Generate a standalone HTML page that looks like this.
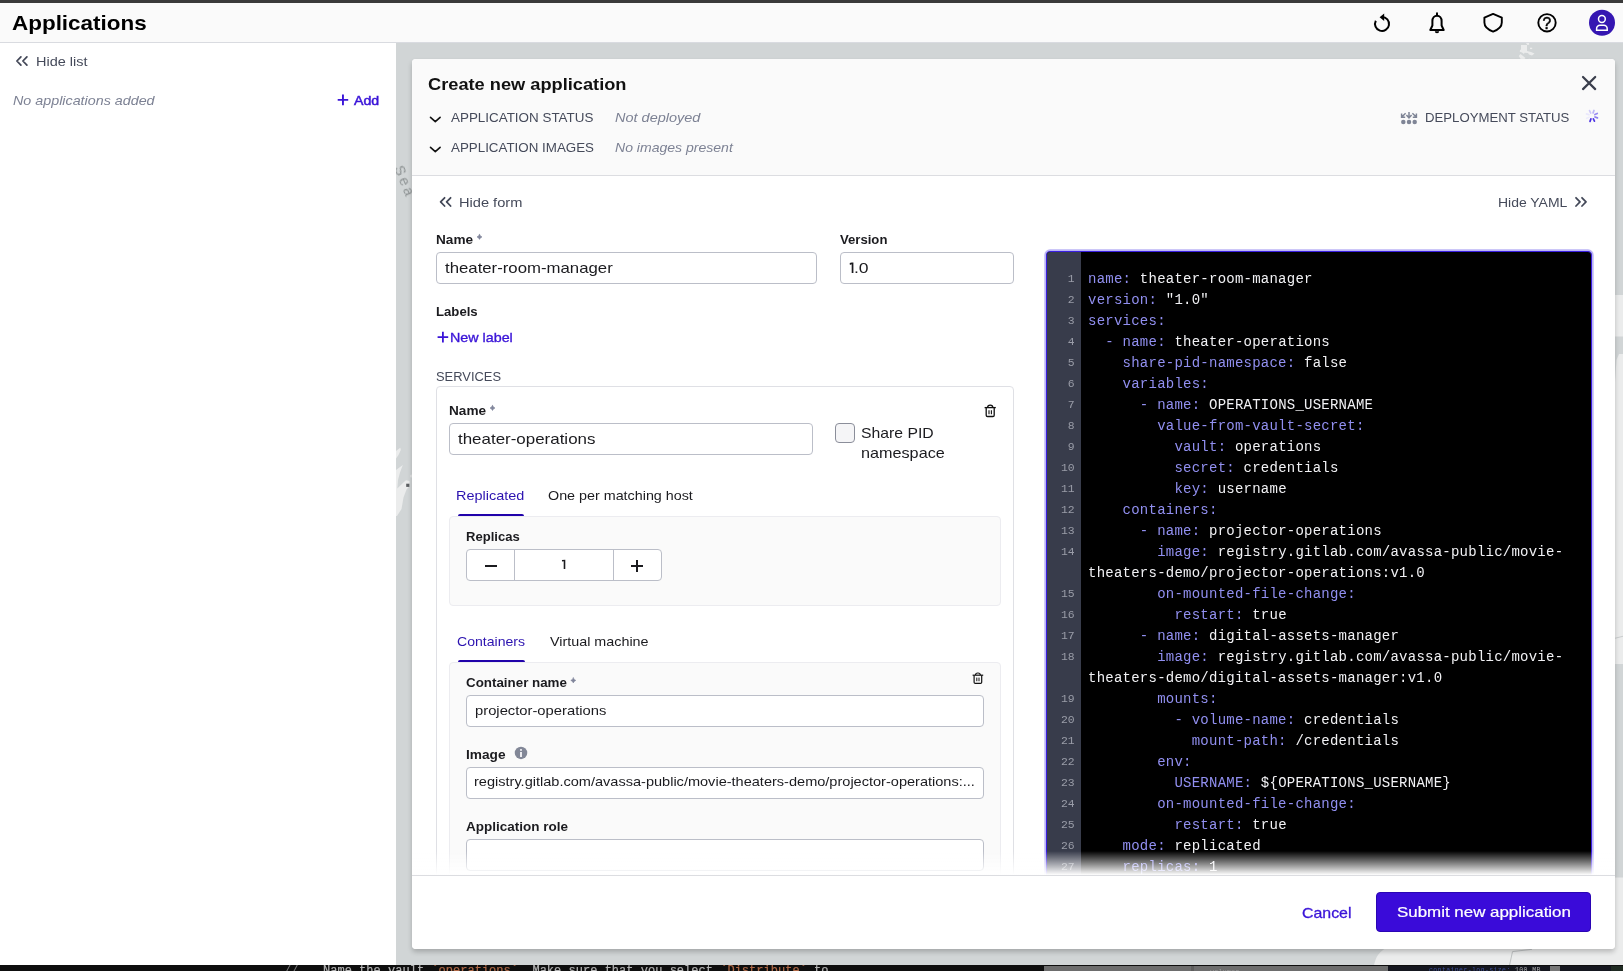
<!DOCTYPE html>
<html><head><meta charset="utf-8">
<style>
*{box-sizing:border-box;margin:0;padding:0}
html,body{width:1623px;height:971px;overflow:hidden;background:#d1d5d6;font-family:"Liberation Sans",sans-serif;color:#1b1b1f}
.abs,.t,svg{position:absolute}
.t{white-space:nowrap;line-height:1;will-change:transform}
svg{overflow:visible}
#topbar{left:0;top:0;width:1623px;height:3px;background:#3a3a3a}
#hdr{left:0;top:3px;width:1623px;height:39px;background:#fafafa}
#hdrline{left:0;top:42px;width:1623px;height:1px;background:#d9dbe0;z-index:1}
#side{left:0;top:43px;width:396px;height:922px;background:#fff}
#map{left:396px;top:42px;width:1227px;height:923px;background:#d1d5d6;overflow:hidden}
#bottom{left:0;top:964.6px;width:1623px;height:7px;background:#0e0e0e;overflow:hidden}
#modal{left:412px;top:59px;width:1203px;height:890px;background:#fff;border-radius:4px;box-shadow:0 3px 5px rgba(0,0,0,.21);overflow:hidden}
#mhead{left:0;top:0;width:1203px;height:117px;background:#fafafa;border-bottom:1px solid #dcdde1}
#mfoot{left:0;top:816px;width:1203px;height:74px;background:#fff;border-top:1px solid #dcdde1}
#fade{left:0;top:786px;width:1203px;height:30px;background:linear-gradient(to bottom,rgba(255,255,255,0),rgba(255,255,255,1))}
.inp{position:absolute;background:#fff;border:1px solid #bbbec8;border-radius:4px}
.panel{position:absolute;background:#fafafa;border:1px solid #ececf0;border-radius:4px}
.ul{position:absolute;height:2.2px;background:#2002aa;border-radius:2px 2px 0 0}
#ed{left:1046px;top:251px;width:545.6px;height:640px;background:#000;border:1px solid #3a1fe0;border-radius:4px;box-shadow:0 0 0 1.7px #bcb5f6;overflow:hidden}
#gut{left:0;top:0;width:34px;height:700px;background:#383c4b}
pre{position:absolute;will-change:transform;font-family:"Liberation Mono",monospace;white-space:pre;margin:0}
#code{left:41.2px;top:16.5px;font-size:14px;line-height:21px;letter-spacing:0.24px;color:#f1f1f4}
#code i{font-style:normal;color:#918ff0}
#nums{left:0;top:16.5px;width:27.7px;text-align:right;font-size:11.4px;line-height:21px;color:#9a9da8}
</style></head><body>
<div class="abs" id="topbar"></div>
<div class="abs" id="hdr"></div>
<div class="abs" id="hdrline"></div>
<div class="abs" id="side"></div>
<div class="abs" id="map"><svg width="1623" height="971" style="left:-396px;top:-42px" fill="#ebecec" stroke="none">
<!-- top island -->
<path d="M1521 45 H1527 V51 L1531 52 L1534.5 53.5 L1532 55.5 L1529 54.5 L1528 53 L1524.5 52.8 L1524 54 L1522 52.5 L1519.8 51.8 L1520 50 L1521 49.5 Z"/>
<path d="M1526 43 L1529 43 L1529.2 44.8 L1527.5 45 Z"/>
<rect x="1530" y="47.7" width="2.2" height="1.4"/>
<path d="M1520.5 54 L1525.5 58 L1524 59.5 H1521 L1518.8 56 Z"/>
<path d="M1529 58.2 L1530 59.5 H1528.6 Z"/>
<!-- left islands -->
<path d="M396 451 L400.3 447.8 L400.8 450 L398.5 455 L396 458.5 Z"/>
<path d="M396 470 L402.8 465 L400 472.5 L398 480 L397.3 488.5 L404.5 481.5 L406 480.3 L409.5 481 L409.6 486 L406.5 489.5 L403.5 497.5 L401.5 509 L397 516 L396 516 Z"/>
<rect x="406.2" y="483.7" width="3.2" height="3.2" fill="#5c5f62"/>
<circle cx="411.6" cy="476" r="1.6" fill="#e4e5e5"/>
<!-- right strip land -->
<rect x="1614" y="295" width="10" height="41.5"/>
<path d="M1614 397 L1616.5 360 L1619 354 H1624 V664 H1614 Z"/>
<path d="M1614 638.5 L1624 636" stroke="#c9cccd" stroke-width="1" fill="none"/>
<rect x="1614" y="877.5" width="10" height="90"/>
<!-- bottom land -->
<path d="M1374 966 C1375 958 1379 952 1386 948 H1624 V966 Z"/>
<path d="M1532 949.3 L1512.5 951.6 L1509.6 965" stroke="#b9bcbd" stroke-width="0.9" fill="none"/>
</svg>
<span class="t" style="left:10.3px;top:121px;font:normal 14.5px 'Liberation Sans';color:#8f9495;letter-spacing:2.8px;transform-origin:0 0;transform:rotate(68deg)">Sea</span>
</div>
<div class="abs" id="bottom"><div class="abs" style="left:1044px;top:1.6px;width:344px;height:6px;background:#6d6d6d"></div>
<div class="abs" style="left:1191px;top:1.6px;width:3px;height:6px;background:#5d5d5d"></div>
<div class="abs" style="left:1388px;top:1px;width:224px;height:6px;background:#15171f"></div>
<div class="abs" style="left:1550px;top:1.6px;width:10px;height:6px;background:#777"></div>
<div class="abs" style="left:1611px;top:1px;width:12px;height:6px;background:#1f2a22"></div>
<span class="t" style="left:284.3px;top:-0.9px;font:12px 'Liberation Mono';color:#7d7d7d">//</span>
<span class="t" style="left:323.3px;top:-0.9px;font:12px 'Liberation Mono';color:#b4b4b4;letter-spacing:0.02px;-webkit-text-stroke:0.2px currentColor">Name the vault <span style="color:#b06a48">`operations`</span>. Make sure that you select <span style="color:#b06a48">`Distribute`</span> to</span>
<span class="t" style="left:1429px;top:2.2px;font:6.5px 'Liberation Mono';color:#3f4f98;letter-spacing:0.4px">container-log-size: <span style="color:#aaa">100 MB</span></span>
<span class="t" style="left:1210px;top:3.5px;font:7px 'Liberation Mono';color:#999">volumes</span>
</div>
<div class="abs" id="modal">
  <div class="abs" id="mhead"></div>
</div>
<!-- form widgets (page coords) -->
<div class="inp" style="left:436px;top:252px;width:381px;height:32px"></div>
<div class="inp" style="left:840px;top:252px;width:174px;height:32px"></div>
<div class="abs" style="left:436px;top:386px;width:578px;height:550px;border:1px solid #dfe0e5;border-radius:4px;background:#fff"></div>
<div class="inp" style="left:449px;top:423px;width:364px;height:32px"></div>
<div class="abs" style="left:835px;top:423px;width:20px;height:20px;border:1px solid #8b8e9a;border-radius:4px;background:#f5f5f7"></div>
<div class="ul" style="left:457.5px;top:514px;width:66px"></div>
<div class="panel" style="left:449px;top:516px;width:552px;height:90px"></div>
<div class="inp" style="left:466px;top:549px;width:196px;height:32px"></div>
<div class="abs" style="left:514px;top:550px;width:1px;height:30px;background:#bbbec8"></div>
<div class="abs" style="left:613px;top:550px;width:1px;height:30px;background:#bbbec8"></div>
<div class="abs" style="left:484.5px;top:564.5px;width:12px;height:2px;background:#1b1b1f"></div>
<div class="abs" style="left:631px;top:564.5px;width:12px;height:2px;background:#1b1b1f"></div>
<div class="abs" style="left:636px;top:559.5px;width:2px;height:12px;background:#1b1b1f"></div>
<div class="ul" style="left:457.5px;top:660px;width:67px"></div>
<div class="panel" style="left:449px;top:662px;width:552px;height:260px"></div>
<div class="inp" style="left:466px;top:695px;width:518px;height:32px"></div>
<div class="inp" style="left:466px;top:767px;width:518px;height:32px"></div>
<div class="inp" style="left:466px;top:839px;width:518px;height:32px"></div>
<!-- editor -->
<div class="abs" id="ed"><div class="abs" id="gut"></div>
<pre id="nums">1
2
3
4
5
6
7
8
9
10
11
12
13
14

15
16
17
18

19
20
21
22
23
24
25
26
27
</pre>
<pre id="code"><i>name:</i> theater-room-manager
<i>version:</i> &quot;1.0&quot;
<i>services:</i>
  <i>- name:</i> theater-operations
    <i>share-pid-namespace:</i> false
    <i>variables:</i>
      <i>- name:</i> OPERATIONS_USERNAME
        <i>value-from-vault-secret:</i>
          <i>vault:</i> operations
          <i>secret:</i> credentials
          <i>key:</i> username
    <i>containers:</i>
      <i>- name:</i> projector-operations
        <i>image:</i> registry.gitlab.com/avassa-public/movie-
theaters-demo/projector-operations:v1.0
        <i>on-mounted-file-change:</i>
          <i>restart:</i> true
      <i>- name:</i> digital-assets-manager
        <i>image:</i> registry.gitlab.com/avassa-public/movie-
theaters-demo/digital-assets-manager:v1.0
        <i>mounts:</i>
          <i>- volume-name:</i> credentials
            <i>mount-path:</i> /credentials
        <i>env:</i>
          <i>USERNAME:</i> ${OPERATIONS_USERNAME}
        <i>on-mounted-file-change:</i>
          <i>restart:</i> true
    <i>mode:</i> replicated
    <i>replicas:</i> 1
</pre>
</div>
<div class="abs" style="left:412px;top:851px;width:1203px;height:24px;background:linear-gradient(to bottom,rgba(255,255,255,0),rgba(255,255,255,1))"></div>
<div class="abs" style="left:412px;top:875px;width:1203px;height:74px;background:#fff;border-top:1px solid #dcdde1;border-radius:0 0 4px 4px"></div>
<div class="abs" style="left:1376px;top:892px;width:215px;height:40px;background:#3a0bd9;border:1px solid #2a05b4;border-radius:4px"></div>
<svg width="1623" height="971" style="left:0;top:0" fill="none" stroke-linecap="round" stroke-linejoin="round">
<!-- header icons -->
<g stroke="#000" stroke-width="2">
<path d="M1382 17 A7 7 0 1 1 1375.8 20.8" stroke-linecap="butt"/>
<path d="M1379.6 17.3 L1384.2 13.6 V21 Z" fill="#000" stroke="none"/>
<path d="M1430.3 30 L1432.4 25.5 V21 a4.6 5.3 0 0 1 9.2 0 V25.5 L1443.7 30 Z"/>
<path d="M1437 13.2 V15" />
<path d="M1434.8 31.2 h4.4 a2.2 2 0 0 1 -4.4 0Z" fill="#000" stroke="none"/>
</g>
<path d="M1493.1 13.9 L1501.8 17.6 V22.5 C1501.8 26.8 1498 29.8 1493.1 31.6 C1488.2 29.8 1484.4 26.8 1484.4 22.5 V17.6 Z" stroke="#000" stroke-width="1.9"/>
<circle cx="1547" cy="22.8" r="8.7" stroke="#000" stroke-width="1.9"/>
<circle cx="1602" cy="22.8" r="13" fill="#3516b2" stroke="none"/>
<circle cx="1601.9" cy="19" r="3.4" stroke="#fff" stroke-width="1.5"/>
<path d="M1596.6 30.3 v-1.6 a3.4 3.4 0 0 1 3.4 -3.4 h3.8 a3.4 3.4 0 0 1 3.4 3.4 v1.6 Z" stroke="#fff" stroke-width="1.5" stroke-linejoin="miter"/>
<!-- double chevrons -->
<g stroke="#424757" stroke-width="1.75">
<path d="M20.9 56.9 L16.9 61 L20.9 65.1 M26.9 56.9 L22.9 61 L26.9 65.1"/>
<path d="M444.6 197.8 L440.6 201.9 L444.6 206 M450.6 197.8 L446.6 201.9 L450.6 206"/>
<path d="M1576 197.8 L1580 201.9 L1576 206 M1582 197.8 L1586 201.9 L1582 206"/>
</g>
<!-- add plus -->
<path d="M337.7 99.9 H348.2 M342.95 94.6 V105.2" stroke="#3a14d8" stroke-width="1.9" stroke-linecap="butt"/>
<!-- new label plus -->
<path d="M437.6 337.1 H448.2 M442.9 331.8 V342.4" stroke="#3a14d8" stroke-width="1.8" stroke-linecap="butt"/>
<!-- chevron downs -->
<g stroke="#111" stroke-width="1.6">
<path d="M430.5 117.3 L435.3 121.7 L440.1 117.3"/>
<path d="M430.5 147.3 L435.3 151.7 L440.1 147.3"/>
</g>
<!-- close X -->
<path d="M1583 77 L1595.2 89.1 M1595.2 77 L1583 89.1" stroke="#3a3e4c" stroke-width="2.2"/>
<!-- deployment icon -->
<g fill="#7f8596" stroke="none">
<circle cx="1403.3" cy="121.9" r="2.25"/><circle cx="1409" cy="121.9" r="2.25"/><circle cx="1414.7" cy="121.9" r="2.25"/>
</g>
<g stroke="#7f8596" stroke-width="1.5" stroke-linecap="butt" stroke-linejoin="miter">
<path d="M1409 112 V117.6 M1406.4 115 L1409 117.8 L1411.6 115"/>
<path d="M1405.6 113.2 L1401.8 117 M1401.6 113.6 V117.2 H1405.2"/>
<path d="M1412.4 113.2 L1416.2 117 M1416.4 113.6 V117.2 H1412.8"/>
</g>
<!-- spinner -->
<g stroke-width="1.7" stroke-linecap="round"><path d="M1590.91 118.91 L1590.02 121.35" stroke="#4a2ee2"/><path d="M1593.35 118.80 L1594.45 121.16" stroke="#5038e4"/><path d="M1595.01 116.99 L1597.45 117.88" stroke="#8b7cf0"/><path d="M1594.90 114.55 L1597.26 113.45" stroke="#9a8df2"/><path d="M1593.09 112.89 L1593.98 110.45" stroke="#bdb5f7"/><path d="M1590.65 113.00 L1589.55 110.64" stroke="#cfc9f9"/><path d="M1588.99 114.81 L1586.55 113.92" stroke="#e9e7fc"/><path d="M1589.10 117.25 L1586.74 118.35" stroke="#eeecfd"/></g>
<!-- trash 1 -->
<g stroke="#111" stroke-width="1.3" stroke-linecap="butt" stroke-linejoin="miter">
<path d="M984.6 407.6 H995.8"/>
<path d="M987.6 407.4 C987.6 404.4 992.8 404.4 992.8 407.4"/>
<path d="M986.2 407.6 V415.2 Q986.2 416.5 987.5 416.5 H992.9 Q994.2 416.5 994.2 415.2 V407.6"/>
<path d="M989 410.2 V414.2 M991.4 410.2 V414.2" stroke-width="1.1"/>
</g>
<!-- trash 2 -->
<g stroke="#111" stroke-width="1.2" stroke-linecap="butt" stroke-linejoin="miter">
<path d="M972.6 675.2 H983.2"/>
<path d="M975.5 675 C975.5 672.3 980.3 672.3 980.3 675"/>
<path d="M974.1 675.2 V682.2 Q974.1 683.4 975.3 683.4 H980.5 Q981.7 683.4 981.7 682.2 V675.2"/>
<path d="M976.8 677.6 V681.2 M979 677.6 V681.2" stroke-width="1"/>
</g>
<!-- info icon -->
<circle cx="521" cy="752.9" r="6.25" fill="#828797" stroke="none"/>
<rect x="520" y="752" width="2" height="5" fill="#ececf0" stroke="none"/>
<rect x="520" y="749.1" width="2" height="1.7" fill="#ececf0" stroke="none"/>
<path d="M561.9 560 L565.3 559.8 V569.1 H563.7 V561.3 L562.1 561.6 Z" fill="#1b1b1f" stroke="none"/>
<path d="M849.7 263 L851.7 262.5 H853.4 V272.9 H851.7 V264.3 L849.9 264.9 Z" fill="#1b1b1f" stroke="none"/>
<!-- asterisks -->
<g fill="#80859b" stroke="#80859b" stroke-width="0.6"><path d="M479.5 234.4 Q480.05 236.35 482.0 236.9 Q480.05 237.45000000000002 479.5 239.4 Q478.95 237.45000000000002 477.0 236.9 Q478.95 236.35 479.5 234.4Z"/><path d="M492.5 405.5 Q493.05 407.45 495.0 408 Q493.05 408.55 492.5 410.5 Q491.95 408.55 490.0 408 Q491.95 407.45 492.5 405.5Z"/><path d="M573.3 677.9 Q573.8499999999999 679.85 575.8 680.4 Q573.8499999999999 680.9499999999999 573.3 682.9 Q572.75 680.9499999999999 570.8 680.4 Q572.75 679.85 573.3 677.9Z"/></g>
<text x="1542.6" y="28.5" font-family="Liberation Sans" font-size="15.6" fill="#000" stroke="#000" stroke-width="0.5">?</text>
</svg>

<span class="t" style="left:11.56px;top:10.56px;font:normal bold 21px 'Liberation Sans';color:#000;transform-origin:0 0;transform:scaleX(1.0689);">Applications</span>
<span class="t" style="left:35.60px;top:54.66px;font:normal normal 12.3px 'Liberation Sans';color:#454a5a;transform-origin:0 0;transform:scaleX(1.1774);">Hide list</span>
<span class="t" style="left:12.57px;top:92.54px;font:italic normal 13px 'Liberation Sans';color:#7d8294;transform-origin:0 0;transform:scaleX(1.1005);">No applications added</span>
<span class="t" style="left:353.82px;top:93.81px;font:normal normal 12.6px 'Liberation Sans';color:#3a14d8;transform-origin:0 0;transform:scaleX(1.1236);-webkit-text-stroke:0.5px currentColor">Add</span>
<span class="t" style="left:427.60px;top:74.75px;font:normal bold 17px 'Liberation Sans';color:#111;transform-origin:0 0;transform:scaleX(1.0720);">Create new application</span>
<span class="t" style="left:450.73px;top:110.59px;font:normal normal 12.3px 'Liberation Sans';color:#454a5a;transform-origin:0 0;transform:scaleX(1.0910);">APPLICATION STATUS</span>
<span class="t" style="left:614.53px;top:109.67px;font:italic normal 13px 'Liberation Sans';color:#7d8294;transform-origin:0 0;transform:scaleX(1.1144);">Not deployed</span>
<span class="t" style="left:450.71px;top:140.59px;font:normal normal 12.3px 'Liberation Sans';color:#454a5a;transform-origin:0 0;transform:scaleX(1.0863);">APPLICATION IMAGES</span>
<span class="t" style="left:614.60px;top:139.67px;font:italic normal 13px 'Liberation Sans';color:#7d8294;transform-origin:0 0;transform:scaleX(1.0798);">No images present</span>
<span class="t" style="left:1424.73px;top:110.59px;font:normal normal 12.3px 'Liberation Sans';color:#454a5a;transform-origin:0 0;transform:scaleX(1.0721);">DEPLOYMENT STATUS</span>
<span class="t" style="left:458.50px;top:195.79px;font:normal normal 12.3px 'Liberation Sans';color:#454a5a;transform-origin:0 0;transform:scaleX(1.1886);">Hide form</span>
<span class="t" style="left:1497.64px;top:195.79px;font:normal normal 12.3px 'Liberation Sans';color:#454a5a;transform-origin:0 0;transform:scaleX(1.1355);">Hide YAML</span>
<span class="t" style="left:435.65px;top:232.69px;font:normal bold 12.5px 'Liberation Sans';color:#1b1b1f;transform-origin:0 0;transform:scaleX(1.0882);">Name</span>
<span class="t" style="left:839.83px;top:232.69px;font:normal bold 12.5px 'Liberation Sans';color:#1b1b1f;transform-origin:0 0;transform:scaleX(1.0494);">Version</span>
<span class="t" style="left:444.91px;top:258.50px;font:normal normal 15px 'Liberation Sans';color:#1b1b1f;transform-origin:0 0;transform:scaleX(1.1179);">theater-room-manager</span>
<span class="t" style="left:853.79px;top:258.57px;font:normal normal 15px 'Liberation Sans';color:#1b1b1f;transform-origin:0 0;transform:scaleX(1.1688);">.0</span>
<span class="t" style="left:435.77px;top:304.69px;font:normal bold 12.5px 'Liberation Sans';color:#1b1b1f;transform-origin:0 0;transform:scaleX(1.0519);">Labels</span>
<span class="t" style="left:449.62px;top:329.74px;font:normal normal 13px 'Liberation Sans';color:#3a14d8;transform-origin:0 0;transform:scaleX(1.0993);-webkit-text-stroke:0.35px currentColor">New label</span>
<span class="t" style="left:435.66px;top:369.59px;font:normal normal 12.3px 'Liberation Sans';color:#454a5a;transform-origin:0 0;transform:scaleX(1.0507);">SERVICES</span>
<span class="t" style="left:448.79px;top:403.69px;font:normal bold 12.5px 'Liberation Sans';color:#1b1b1f;transform-origin:0 0;transform:scaleX(1.0882);">Name</span>
<span class="t" style="left:457.51px;top:429.50px;font:normal normal 15px 'Liberation Sans';color:#1b1b1f;transform-origin:0 0;transform:scaleX(1.1289);">theater-operations</span>
<span class="t" style="left:860.82px;top:423.74px;font:normal normal 15px 'Liberation Sans';color:#1b1b1f;transform-origin:0 0;transform:scaleX(1.0507);">Share PID</span>
<span class="t" style="left:860.72px;top:443.77px;font:normal normal 15px 'Liberation Sans';color:#1b1b1f;transform-origin:0 0;transform:scaleX(1.0800);">namespace</span>
<span class="t" style="left:455.69px;top:487.69px;font:normal normal 12.8px 'Liberation Sans';color:#2b12b0;transform-origin:0 0;transform:scaleX(1.1287);">Replicated</span>
<span class="t" style="left:547.78px;top:487.69px;font:normal normal 12.8px 'Liberation Sans';color:#1b1b1f;transform-origin:0 0;transform:scaleX(1.1188);">One per matching host</span>
<span class="t" style="left:465.52px;top:529.62px;font:normal bold 12.5px 'Liberation Sans';color:#1b1b1f;transform-origin:0 0;transform:scaleX(1.0439);">Replicas</span>
<span class="t" style="left:456.66px;top:633.90px;font:normal normal 12.8px 'Liberation Sans';color:#2b12b0;transform-origin:0 0;transform:scaleX(1.0995);">Containers</span>
<span class="t" style="left:549.53px;top:633.90px;font:normal normal 12.8px 'Liberation Sans';color:#1b1b1f;transform-origin:0 0;transform:scaleX(1.1200);">Virtual machine</span>
<span class="t" style="left:465.74px;top:675.69px;font:normal bold 12.5px 'Liberation Sans';color:#1b1b1f;transform-origin:0 0;transform:scaleX(1.0683);">Container name</span>
<span class="t" style="left:474.50px;top:702.72px;font:normal normal 13px 'Liberation Sans';color:#1b1b1f;transform-origin:0 0;transform:scaleX(1.1360);">projector-operations</span>
<span class="t" style="left:465.70px;top:747.76px;font:normal bold 12.5px 'Liberation Sans';color:#1b1b1f;transform-origin:0 0;transform:scaleX(1.0942);">Image</span>
<span class="t" style="left:473.72px;top:773.94px;font:normal normal 13px 'Liberation Sans';color:#1b1b1f;transform-origin:0 0;transform:scaleX(1.1187);">registry.gitlab.com/avassa-public/movie-theaters-demo/projector-operations:...</span>
<span class="t" style="left:465.72px;top:819.76px;font:normal bold 12.5px 'Liberation Sans';color:#1b1b1f;transform-origin:0 0;transform:scaleX(1.0790);">Application role</span>
<span class="t" style="left:1301.52px;top:904.52px;font:normal normal 14.2px 'Liberation Sans';color:#3a14d8;transform-origin:0 0;transform:scaleX(1.1205);-webkit-text-stroke:0.3px currentColor">Cancel</span>
<span class="t" style="left:1396.73px;top:903.65px;font:normal normal 14.2px 'Liberation Sans';color:#fff;transform-origin:0 0;transform:scaleX(1.1919);-webkit-text-stroke:0.2px currentColor">Submit new application</span>

</body></html>
